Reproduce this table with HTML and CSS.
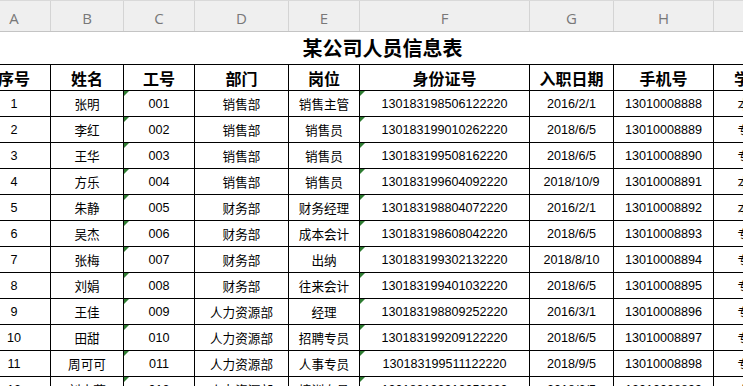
FILE: index.html
```html
<!DOCTYPE html>
<html lang="zh">
<head>
<meta charset="utf-8">
<title>某公司人员信息表</title>
<link rel="stylesheet" href="styles.css">
</head>
<body>
<div class="sheet">
  <div class="colbar">
    <div class="ch">A</div><div class="ch">B</div><div class="ch">C</div><div class="ch">D</div><div class="ch">E</div><div class="ch">F</div><div class="ch">G</div><div class="ch">H</div><div class="ch">I</div>
  </div>
  <div class="grid">
    <div class="title">某公司人员信息表</div>
    <div class="hd">序号</div><div class="hd">姓名</div><div class="hd">工号</div><div class="hd">部门</div><div class="hd">岗位</div><div class="hd">身份证号</div><div class="hd">入职日期</div><div class="hd">手机号</div><div class="hd">学历</div>

    <div class="c">1</div><div class="c">张明</div><div class="c tri">001</div><div class="c">销售部</div><div class="c">销售主管</div><div class="c tri">130183198506122220</div><div class="c">2016/2/1</div><div class="c">13010008888</div><div class="c">本科</div>
    <div class="c">2</div><div class="c">李红</div><div class="c tri">002</div><div class="c">销售部</div><div class="c">销售员</div><div class="c tri">130183199010262220</div><div class="c">2018/6/5</div><div class="c">13010008889</div><div class="c">专科</div>
    <div class="c">3</div><div class="c">王华</div><div class="c tri">003</div><div class="c">销售部</div><div class="c">销售员</div><div class="c tri">130183199508162220</div><div class="c">2018/6/5</div><div class="c">13010008890</div><div class="c">专科</div>
    <div class="c">4</div><div class="c">方乐</div><div class="c tri">004</div><div class="c">销售部</div><div class="c">销售员</div><div class="c tri">130183199604092220</div><div class="c">2018/10/9</div><div class="c">13010008891</div><div class="c">本科</div>
    <div class="c">5</div><div class="c">朱静</div><div class="c tri">005</div><div class="c">财务部</div><div class="c">财务经理</div><div class="c tri">130183198804072220</div><div class="c">2016/2/1</div><div class="c">13010008892</div><div class="c">本科</div>
    <div class="c">6</div><div class="c">吴杰</div><div class="c tri">006</div><div class="c">财务部</div><div class="c">成本会计</div><div class="c tri">130183198608042220</div><div class="c">2018/6/5</div><div class="c">13010008893</div><div class="c">专科</div>
    <div class="c">7</div><div class="c">张梅</div><div class="c tri">007</div><div class="c">财务部</div><div class="c">出纳</div><div class="c tri">130183199302132220</div><div class="c">2018/8/10</div><div class="c">13010008894</div><div class="c">专科</div>
    <div class="c">8</div><div class="c">刘娟</div><div class="c tri">008</div><div class="c">财务部</div><div class="c">往来会计</div><div class="c tri">130183199401032220</div><div class="c">2018/6/5</div><div class="c">13010008895</div><div class="c">专科</div>
    <div class="c">9</div><div class="c">王佳</div><div class="c tri">009</div><div class="c">人力资源部</div><div class="c">经理</div><div class="c tri">130183198809252220</div><div class="c">2016/3/1</div><div class="c">13010008896</div><div class="c">专科</div>
    <div class="c">10</div><div class="c">田甜</div><div class="c tri">010</div><div class="c">人力资源部</div><div class="c">招聘专员</div><div class="c tri">130183199209122220</div><div class="c">2018/6/5</div><div class="c">13010008897</div><div class="c">专科</div>
    <div class="c">11</div><div class="c">周可可</div><div class="c tri">011</div><div class="c">人力资源部</div><div class="c">人事专员</div><div class="c tri">130183199511122220</div><div class="c">2018/9/5</div><div class="c">13010008898</div><div class="c">专科</div>
    <div class="c">12</div><div class="c">刘小燕</div><div class="c tri">012</div><div class="c">人力资源部</div><div class="c">培训专员</div><div class="c tri">130183199312052220</div><div class="c">2018/6/5</div><div class="c">13010008899</div><div class="c">专科</div>
  </div>
</div>
</body>
</html>
```

FILE: styles.css
```css
html, body {
  margin: 0;
  padding: 0;
  background: #fff;
  overflow: hidden;
}
body {
  width: 743px;
  height: 386px;
}
.sheet {
  margin-left: -22px;
  width: 809px;
}
.colbar {
  display: grid;
  grid-template-columns: 73px 73px 71px 94px 71px 170px 84px 100px 73px;
  height: 32px;
  box-sizing: border-box;
  border-top: 1px solid #d9d9d9;
  border-bottom: 1px solid #c4c4c4;
  background: #efefef;
}
.ch {
  box-sizing: border-box;
  border-right: 1px solid #d4d4d4;
  display: flex;
  align-items: center;
  justify-content: center;
  padding-top: 4px;
  font-family: "Open Sans", "Liberation Sans", sans-serif;
  font-size: 15px;
  color: #787878;
}
.grid {
  display: grid;
  grid-template-columns: 73px 73px 71px 94px 71px 170px 84px 100px 73px;
  grid-template-rows: 32px 27px;
  grid-auto-rows: 26px;
}
.title {
  grid-column: 1 / -1;
  display: flex;
  align-items: center;
  justify-content: center;
  padding-bottom: 2px;
  font-family: "Noto Sans CJK SC", sans-serif;
  font-weight: 700;
  font-size: 20px;
  color: #000;
}
.hd, .c {
  box-sizing: border-box;
  border-right: 1px solid #000;
  border-bottom: 1px solid #000;
  display: flex;
  align-items: center;
  justify-content: center;
  white-space: nowrap;
  overflow: hidden;
  color: #000;
}
.hd {
  border-top: 1px solid #000;
  font-family: "Noto Sans CJK SC", sans-serif;
  font-weight: 700;
  font-size: 16px;
}
.c {
  font-family: "Liberation Sans", "Noto Sans CJK SC", sans-serif;
  font-size: 12.6px;
  position: relative;
}
.tri::before {
  content: "";
  position: absolute;
  top: 0;
  left: 0;
  border-top: 5px solid #2f7d32;
  border-right: 5px solid transparent;
}
```
